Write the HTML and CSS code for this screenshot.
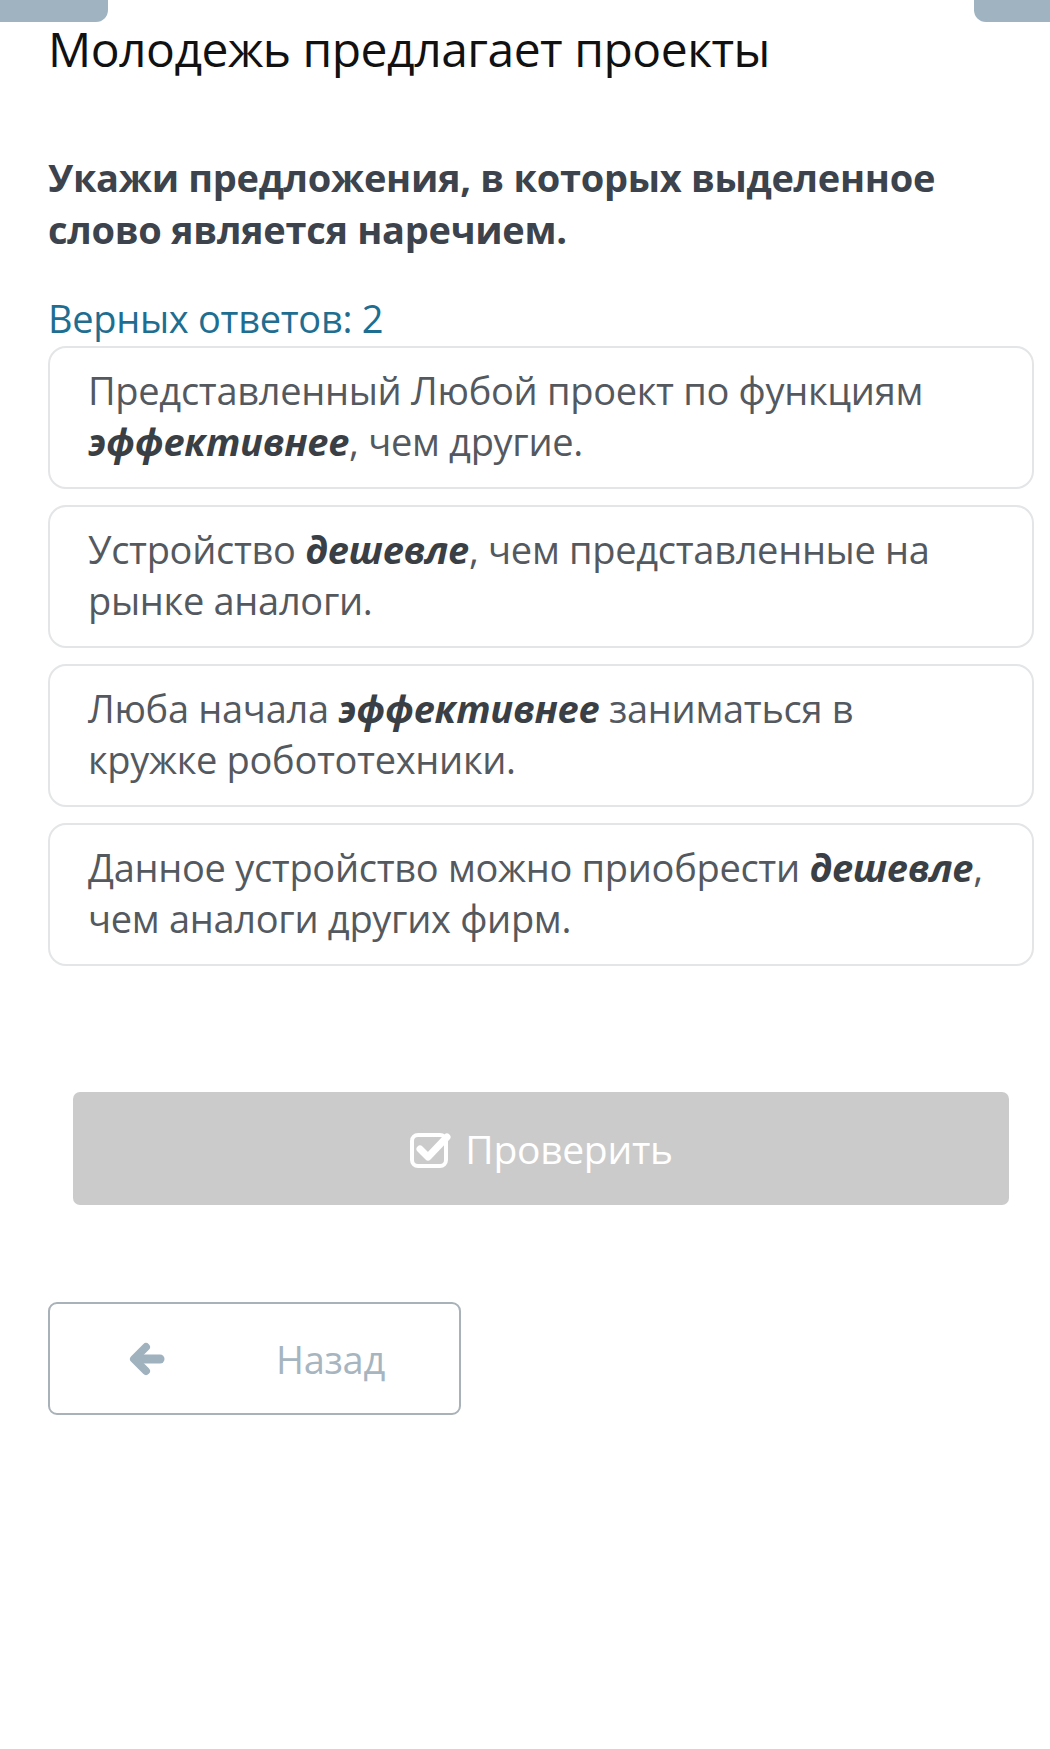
FILE: index.html
```html
<!DOCTYPE html>
<html lang="ru">
<head>
<meta charset="utf-8">
<link rel="stylesheet" href="styles.css">
</head>
<body>
<div class="tabs"><div class="tab tab-left"></div><div class="tab tab-right"></div></div>
<main class="page">
  <h1 class="title">Молодежь предлагает проекты</h1>
  <p class="question">Укажи предложения, в которых выделенное слово является наречием.</p>
  <p class="count">Верных ответов: 2</p>
  <div class="options">
    <div class="option">Представленный Любой проект по функциям <b>эффективнее</b>, чем другие.</div>
    <div class="option">Устройство <b>дешевле</b>, чем представленные на рынке аналоги.</div>
    <div class="option">Люба начала <b>эффективнее</b> заниматься в кружке робототехники.</div>
    <div class="option">Данное устройство можно приобрести <b>дешевле</b>, чем аналоги других фирм.</div>
  </div>
  <div class="check-wrap">
    <button class="check">
      <svg class="check-icon" viewBox="0 0 44 40" width="44" height="40"><rect x="3" y="6" width="34" height="31" rx="6" fill="none" stroke="#fff" stroke-width="4"/><path d="M11 20 L19 28 L38 8" fill="none" stroke="#fff" stroke-width="7" stroke-linecap="round" stroke-linejoin="round"/></svg>
      <span>Проверить</span>
    </button>
  </div>
  <button class="back">
    <svg class="back-icon" viewBox="0 0 40 36" width="40" height="36"><path d="M20 6 L8 18 L20 30" fill="none" stroke="#a1b2bf" stroke-width="8" stroke-linecap="round" stroke-linejoin="round"/><path d="M10 18 H34" stroke="#a1b2bf" stroke-width="9" stroke-linecap="round"/></svg>
    <span>Назад</span>
  </button>
</main>
</body>
</html>
```
FILE: styles.css
```css
* { box-sizing: border-box; }
html, body { margin: 0; padding: 0; background: #fff; }
body { font-family: "Open Sans", "Noto Sans", sans-serif; width: 1050px; }
.tabs { display: flex; justify-content: space-between; height: 22px; }
.tab { background: #9fb3c0; height: 22px; }
.tab-left { width: 108px; border-bottom-right-radius: 12px; }
.tab-right { width: 76px; border-bottom-left-radius: 12px; }
.page { padding: 0 16px 0 48px; }
.title { margin: 0; font-weight: 400; font-size: 48px; line-height: 54px; color: #111; letter-spacing: -0.5px; }
.question { margin: 75px 0 0; font-weight: 700; font-size: 38px; line-height: 52px; color: #3c434c; letter-spacing: -0.3px; }
.count { margin: 41px 0 0; font-size: 38px; line-height: 44px; color: #1e6e92; letter-spacing: -0.3px; }
.options { display: flex; flex-direction: column; gap: 16px; margin-top: 6px; }
.option { height: 143px; border: 2px solid #e3e5e7; border-radius: 18px; padding: 17px 44px 0 38px; font-size: 38px; line-height: 51px; color: #54595f; letter-spacing: -0.3px; }
.option b { font-weight: 700; font-style: italic; color: #3a3f46; }
.check-wrap { padding: 126px 25px 0 25px; }
.check { width: 100%; height: 113px; border: none; border-radius: 7px; background: #cbcbcb; color: #fff; display: flex; align-items: center; justify-content: center; gap: 12px; font-family: inherit; font-size: 39px; letter-spacing: -0.3px; padding: 0; }
.back { margin-top: 97px; width: 413px; height: 113px; border: 2px solid #a9b2b8; border-radius: 9px; background: #fff; display: flex; align-items: center; padding: 0 0 0 76px; gap: 110px; font-family: inherit; font-size: 38px; color: #a6b5c0; letter-spacing: -0.3px; }
```
